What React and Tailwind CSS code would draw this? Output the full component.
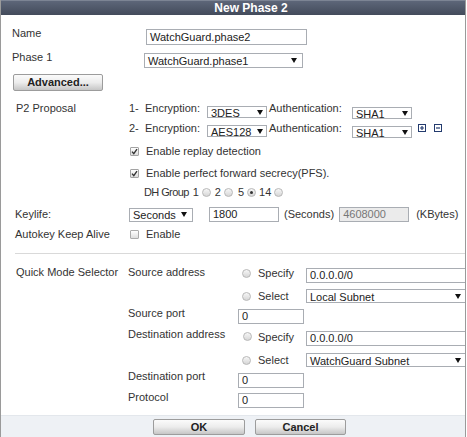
const font = { fontFamily: '"Liberation Sans", Arial, sans-serif' };

function Field({ w, h = 15, value, disabled, className = "" }) {
  return (
    <div
      className={`flex shrink-0 items-center border border-[#a9adb3] px-[3px] text-[11px] leading-none ${
        disabled ? "bg-[#ebebeb] text-[#777]" : "bg-white text-[#222]"
      } ${w} ${className}`}
      style={{ height: h }}
    >
      {value}
    </div>
  );
}

function Select({ w, h = 14, value, tight, className = "" }) {
  return (
    <div
      className={`flex shrink-0 items-center justify-between border border-[#a9adb3] bg-white pl-[3px] text-[11px] leading-none text-[#222] ${
        tight ? "pr-[3px]" : "pr-[5px]"
      } ${w} ${className}`}
      style={{ height: h }}
    >
      <span className="pt-[2px]">{value}</span>
      <svg width="6" height="5" viewBox="0 0 6 5" className="shrink-0">
        <path d="M0 0h6L3 5z" fill="#111" />
      </svg>
    </div>
  );
}

function Check({ className = "" }) {
  return (
    <div
      className={`flex h-[9px] w-[9px] shrink-0 items-center justify-center rounded-[1px] border border-[#a3a3a3] bg-gradient-to-b from-white to-[#dcdcdc] ${className}`}
    >
      <svg width="7" height="7" viewBox="0 0 7 7">
        <path d="M1 3.6 2.8 5.6 6 1.2" fill="none" stroke="#333" strokeWidth="1.4" />
      </svg>
    </div>
  );
}

function EmptyCheck({ className = "" }) {
  return (
    <div
      className={`h-[9px] w-[9px] shrink-0 rounded-[1px] border border-[#ababab] bg-gradient-to-b from-white to-[#dedede] ${className}`}
    />
  );
}

function Radio({ checked, className = "" }) {
  return (
    <div
      className={`flex h-[9px] w-[9px] shrink-0 items-center justify-center rounded-full border border-[#b8b8b8] bg-gradient-to-b from-[#f7f7f7] to-[#d6d6d6] ${className}`}
    >
      {checked && <div className="h-[3px] w-[3px] rounded-full bg-[#333]" />}
    </div>
  );
}

function Button({ children, w }) {
  return (
    <div
      className={`flex h-[16px] shrink-0 items-center justify-center rounded-[2px] border border-[#9c9c9c] bg-gradient-to-b from-[#fbfbfb] via-[#ececec] to-[#c6c6c6] text-[11px] font-bold text-[#222] ${w}`}
    >
      {children}
    </div>
  );
}

function Square({ minus }) {
  return (
    <svg width="8" height="8" viewBox="0 0 8 8" className="shrink-0">
      <rect x="0.5" y="0.5" width="7" height="7" fill="#fff" stroke="#233b6e" />
      <path d={minus ? "M2 4h4" : "M2 4h4M4 2v4"} stroke="#233b6e" strokeWidth="1.2" />
    </svg>
  );
}

export default function App() {
  return (
    <div className="h-[437px] w-[467px] whitespace-nowrap bg-white text-[11px] text-[#333]" style={font}>
      <div className="flex h-[437px] w-[466px] flex-col overflow-hidden border-x border-[#9a9a9a]">
        {/* title bar */}
        <div className="flex h-[15px] shrink-0 items-center justify-center border-t border-[#7c8494] bg-gradient-to-b from-[#5d6679] to-[#434b5b] pl-[36px] text-[12px] font-bold text-white">
          New Phase 2
        </div>

        <div className="flex flex-1 flex-col pl-[11px]">
          {/* Name */}
          <div className="mt-[12px] flex h-[18px] items-start">
            <span className="w-[134px] shrink-0 leading-[12px]">Name</span>
            <Field w="w-[161px]" h={16} value="WatchGuard.phase2" className="mt-[2px]" />
          </div>

          {/* Phase 1 */}
          <div className="mt-[6px] flex h-[17px] items-start">
            <span className="w-[132px] shrink-0 leading-[12px]">Phase 1</span>
            <Select w="w-[159px]" h={15} value="WatchGuard.phase1" className="mt-[2px]" />
          </div>

          <div className="mt-[6px] ml-[1px] flex">
            <Button w="w-[90px] h-[17px]">Advanced...</Button>
          </div>

          {/* P2 Proposal */}
          <div className="mt-[11px] flex">
            <span className="w-[117px] shrink-0 pl-[4px] leading-[12px]">P2 Proposal</span>
            <div className="flex flex-col">
              <div className="flex h-[16px] items-start">
                <span className="w-[16px] shrink-0 leading-[12px]">1-</span>
                <span className="w-[62px] shrink-0 leading-[12px]">Encryption:</span>
                <Select w="w-[60px]" h={12} value="3DES" tight className="mt-[4px]" />
                <span className="ml-[2px] w-[83px] shrink-0 leading-[12px]">Authentication:</span>
                <Select w="w-[60px]" h={12} value="SHA1" tight className="mt-[5px]" />
              </div>
              <div className="mt-[4px] flex h-[16px] items-start">
                <span className="w-[16px] shrink-0 leading-[12px]">2-</span>
                <span className="w-[62px] shrink-0 leading-[12px]">Encryption:</span>
                <Select w="w-[60px]" h={12} value="AES128" tight className="mt-[3px]" />
                <span className="ml-[2px] w-[83px] shrink-0 leading-[12px]">Authentication:</span>
                <Select w="w-[60px]" h={12} value="SHA1" tight className="mt-[4px]" />
                <div className="mt-[2px] ml-[6px] flex gap-[8px]">
                  <Square />
                  <Square minus />
                </div>
              </div>
              <div className="mt-[6px] flex h-[14px] items-center">
                <Check className="ml-[1px]" />
                <span className="ml-[7px]">Enable replay detection</span>
              </div>
              <div className="mt-[8px] flex h-[14px] items-center">
                <Check className="ml-[1px]" />
                <span className="ml-[7px]">Enable perfect forward secrecy(PFS).</span>
              </div>
              <div className="mt-[5px] flex h-[14px] items-center pl-[15px]">
                <span className="tracking-[-0.6px]">DH Group</span>
                <span className="ml-[4px]">1</span>
                <Radio className="ml-[3px]" />
                <span className="ml-[4px]">2</span>
                <Radio className="ml-[3px]" />
                <span className="ml-[5px]">5</span>
                <Radio checked className="ml-[3px]" />
                <span className="ml-[3px]">14</span>
                <Radio className="ml-[3px]" />
              </div>
            </div>
          </div>

          {/* Keylife */}
          <div className="mt-[8px] flex h-[15px] items-center">
            <span className="w-[117px] shrink-0 pl-[3px]">Keylife:</span>
            <Select w="w-[64px]" h={14} value="Seconds" />
            <Field w="w-[70px]" h={15} value="1800" className="ml-[16px]" />
            <span className="ml-[5px]">(Seconds)</span>
            <Field w="w-[70px]" h={15} value="4608000" disabled className="ml-[5px]" />
            <span className="ml-[7px]">(KBytes)</span>
          </div>

          {/* Autokey */}
          <div className="mt-[5px] flex h-[14px] items-center">
            <span className="w-[118px] shrink-0 pl-[3px]">Autokey Keep Alive</span>
            <EmptyCheck />
            <span className="ml-[7px]">Enable</span>
          </div>

          <div className="mt-[12px] ml-[3px] h-px bg-[#d9d9d9]" />

          {/* Quick Mode Selector */}
          <div className="mt-[12px] flex">
            <span className="w-[116px] shrink-0 pl-[4px] leading-[12px]">Quick Mode Selector</span>
            <div className="flex flex-col">
              <div className="flex h-[17px] items-start">
                <span className="w-[114px] shrink-0 leading-[12px]">Source address</span>
                <Radio className="mt-[3px]" />
                <span className="ml-[7px] w-[48px] shrink-0 pt-[1px] leading-[12px]">Specify</span>
                <Field w="w-[180px]" h={15} value="0.0.0.0/0" className="mt-[2px]" />
              </div>
              <div className="mt-[6px] flex h-[14px] items-center">
                <span className="w-[114px] shrink-0" />
                <Radio />
                <span className="ml-[7px] w-[48px] shrink-0">Select</span>
                <Select w="w-[161px]" h={14} value="Local Subnet" />
              </div>
              <div className="mt-[4px] flex h-[17px] items-start">
                <span className="w-[110px] shrink-0 leading-[12px]">Source port</span>
                <Field w="w-[66px]" h={15} value="0" className="mt-[2px]" />
              </div>
              <div className="mt-[4px] flex h-[18px] items-start">
                <span className="w-[115px] shrink-0 leading-[12px]">Destination address</span>
                <Radio className="mt-[4px]" />
                <span className="ml-[6px] w-[48px] shrink-0 pt-[3px] leading-[12px]">Specify</span>
                <Field w="w-[180px]" h={15} value="0.0.0.0/0" className="mt-[3px]" />
              </div>
              <div className="mt-[7px] flex h-[14px] items-center">
                <span className="w-[114px] shrink-0" />
                <Radio />
                <span className="ml-[7px] w-[48px] shrink-0">Select</span>
                <Select w="w-[161px]" h={14} value="WatchGuard Subnet" />
              </div>
              <div className="mt-[3px] flex h-[18px] items-start">
                <span className="w-[110px] shrink-0 leading-[12px]">Destination port</span>
                <Field w="w-[66px]" h={15} value="0" className="mt-[3px]" />
              </div>
              <div className="mt-[3px] flex h-[17px] items-start">
                <span className="w-[110px] shrink-0 leading-[12px]">Protocol</span>
                <Field w="w-[66px]" h={15} value="0" className="mt-[2px]" />
              </div>
            </div>
          </div>
        </div>

        {/* footer */}
        <div className="flex h-[22px] shrink-0 items-start gap-[10px] border-t border-[#e3e7ec] bg-[#eef1f5] pt-[3px] pl-[152px]">
          <Button w="w-[92px]">OK</Button>
          <Button w="w-[91px]">Cancel</Button>
        </div>
      </div>
    </div>
  );
}
